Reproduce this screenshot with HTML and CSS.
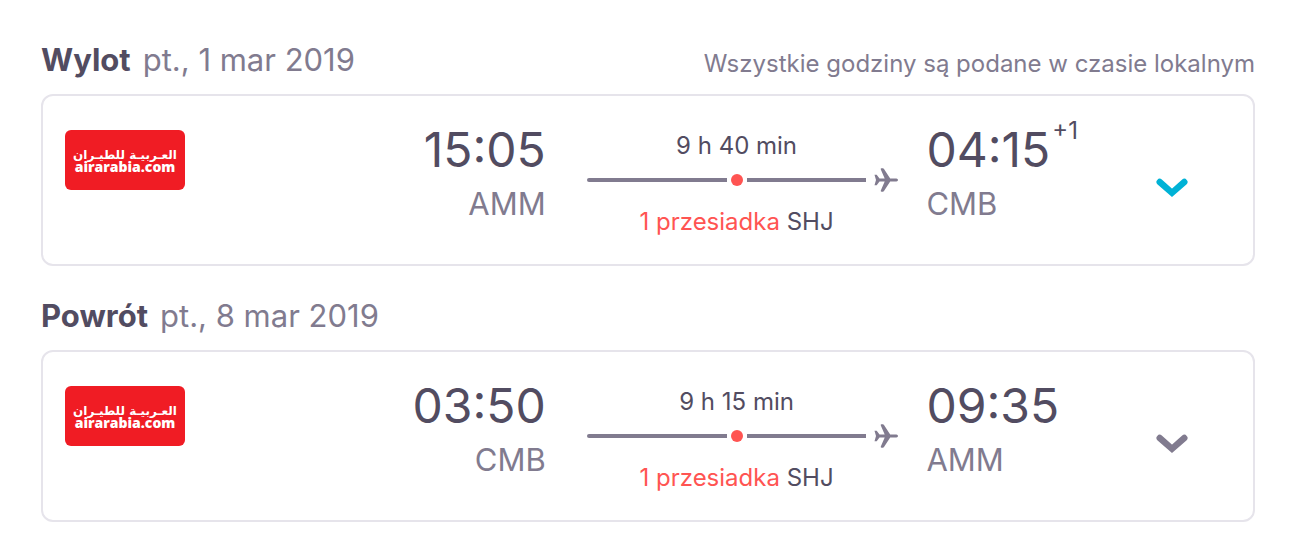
FILE: index.html
```
<!DOCTYPE html>
<html lang="pl">
<head>
<meta charset="utf-8">
<meta name="viewport" content="width=device-width, initial-scale=1">
<title>Wylot i powrót</title>
<link rel="stylesheet" href="styles.css">
</head>
<body>
<svg class="defs" aria-hidden="true">
  <symbol id="plane" viewBox="0 0 24 24">
    <path d="M0.5 6.8h2.2l2.8 3.8h5.2L6.8 1.4Q6.4 0.3 7.5 0.3h1.3q0.8 0 1.2 0.7l6.2 9.6h6.2q1.6 0.3 1.6 1.4t-1.6 1.4h-6.2L10 23q-0.4 0.7-1.2 0.7H7.5q-1.1 0-0.7-1.1l3.9-9.2H5.5l-2.8 3.8H0.5L2 12z"/>
  </symbol>
  <symbol id="chevron" viewBox="0 0 32 20">
    <path d="M3.7 4 16 14.8 28.3 4" fill="none" stroke="currentColor" stroke-width="6.4" stroke-linecap="round"/>
  </symbol>
  <symbol id="airline" viewBox="0 0 120 60">
    <rect width="120" height="60" fill="#f01c24"/>
    <text class="logo-arabic" x="60" y="29" text-anchor="middle">العـربيـة للطيـران</text>
    <text class="logo-latin" x="60" y="42" text-anchor="middle">airarabia.com</text>
  </symbol>
</svg>
<main class="trip">
  <section class="journey">
    <header class="journey-head">
      <h2 class="journey-title">Wylot <span class="journey-date">pt., 1 mar 2019</span></h2>
      <p class="journey-note">Wszystkie godziny są podane w czasie lokalnym</p>
    </header>
    <article class="card">
      <svg class="logo" role="img" aria-label="Air Arabia"><use href="#airline"/></svg>
      <div class="point departure">
        <div class="time">15:05</div>
        <div class="code">AMM</div>
      </div>
      <div class="stops">
        <div class="duration">9 h 40 min</div>
        <div class="route"><span class="line line-start"></span><span class="dot"></span><span class="line"></span><svg class="plane" aria-hidden="true"><use href="#plane"/></svg></div>
        <div class="via"><span class="count">1 przesiadka</span> SHJ</div>
      </div>
      <div class="point">
        <div class="time">04:15<span class="next-day">+1</span></div>
        <div class="code">CMB</div>
      </div>
      <button class="toggle toggle-active" type="button" aria-label="Szczegóły wylotu"><svg class="chevron" aria-hidden="true"><use href="#chevron"/></svg></button>
    </article>
  </section>
  <section class="journey">
    <header class="journey-head">
      <h2 class="journey-title">Powrót <span class="journey-date">pt., 8 mar 2019</span></h2>
    </header>
    <article class="card">
      <svg class="logo" role="img" aria-label="Air Arabia"><use href="#airline"/></svg>
      <div class="point departure">
        <div class="time">03:50</div>
        <div class="code">CMB</div>
      </div>
      <div class="stops">
        <div class="duration">9 h 15 min</div>
        <div class="route"><span class="line line-start"></span><span class="dot"></span><span class="line"></span><svg class="plane" aria-hidden="true"><use href="#plane"/></svg></div>
        <div class="via"><span class="count">1 przesiadka</span> SHJ</div>
      </div>
      <div class="point">
        <div class="time">09:35</div>
        <div class="code">AMM</div>
      </div>
      <button class="toggle" type="button" aria-label="Szczegóły powrotu"><svg class="chevron" aria-hidden="true"><use href="#chevron"/></svg></button>
    </article>
  </section>
</main>
</body>
</html>
```
FILE: styles.css
```
* {
  box-sizing: border-box;
}

body {
  margin: 0;
  background: #fff;
  color: #524c61;
  font-family: Inter, "Liberation Sans", sans-serif;
}

.defs {
  position: absolute;
  width: 0;
  height: 0;
}

.trip {
  display: flex;
  flex-direction: column;
  gap: 30px;
  padding: 40px 57px 36px 41px;
}

.journey {
  display: flex;
  flex-direction: column;
  gap: 14px;
}

.journey-head {
  display: flex;
  align-items: flex-end;
  justify-content: space-between;
  height: 40px;
}

.journey-title,
.journey-note {
  margin: 0;
  line-height: 40px;
}

.journey-title {
  display: flex;
  gap: 12px;
  font-size: 31px;
  font-weight: 700;
}

.journey-date {
  font-weight: 400;
  color: #817b8f;
}

.journey-note {
  font-size: 24px;
  line-height: 32px;
  color: #817b8f;
}

.card {
  display: grid;
  grid-template-columns: 120px 36fr 38fr 20fr 9fr;
  padding: 22px 36px 26px 22px;
  border: 2px solid #e6e4eb;
  border-radius: 12px;
}

.logo {
  width: 120px;
  height: 60px;
  margin-top: 12px;
  border-radius: 6px;
}

.logo-arabic {
  fill: #fff;
  font: 700 12px "DejaVu Sans", sans-serif;
}

.logo-latin {
  fill: #fff;
  font: 800 14px "Open Sans", sans-serif;
}

.time {
  font-size: 48px;
  line-height: 64px;
  white-space: nowrap;
}

.next-day {
  margin-left: 2px;
  font-size: 24px;
  line-height: 24px;
  vertical-align: 28px;
}

.code {
  font-size: 31px;
  line-height: 44px;
  color: #817b8f;
}

.departure {
  text-align: right;
}

.stops {
  padding: 12px 28px 0 41px;
  font-size: 24px;
  line-height: 32px;
  text-align: center;
  white-space: nowrap;
}

.duration,
.via {
  padding-right: 12px;
}

.route {
  display: flex;
  align-items: center;
  height: 36px;
}

.line {
  flex: 120;
  height: 4px;
  background: #817b8f;
}

.line-start {
  flex: 140;
  border-radius: 2px 0 0 2px;
}

.dot {
  width: 12px;
  height: 12px;
  margin: 0 4px;
  border-radius: 50%;
  background: #ff5452;
}

.plane {
  width: 24px;
  height: 24px;
  margin-left: 8px;
  fill: #817b8f;
}

.count {
  color: #ff5452;
}

.via {
  margin-top: 8px;
}

.toggle {
  display: flex;
  align-items: center;
  justify-content: center;
  height: 92px;
  margin-top: 24px;
  padding: 0;
  border: 0;
  background: none;
  color: #817b8f;
}

.toggle-active {
  color: #00b2d6;
}

.chevron {
  width: 32px;
  height: 20px;
}
```
